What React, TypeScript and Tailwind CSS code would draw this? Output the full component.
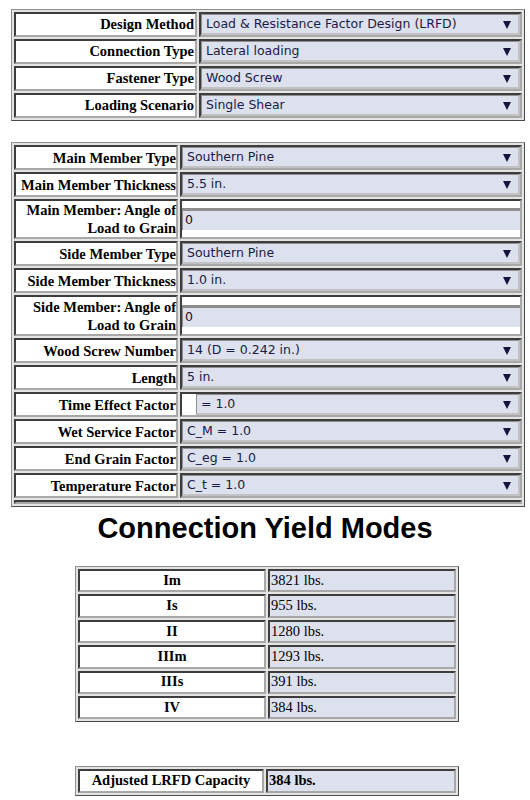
import React from "react";

const serif = "font-['Liberation_Serif','Times_New_Roman',serif]";
const sans = "font-['DejaVu_Sans','Verdana',sans-serif]";
const arial = "font-['Liberation_Sans','Arial',sans-serif]";

const outer =
  "border border-t-[#8e8e8e] border-l-[#8e8e8e] border-b-[#4a4a4a] border-r-[#4a4a4a] bg-[#e4e4e4] p-[2px] flex flex-col gap-[2px]";
const cell =
  "border-2 border-t-[#3d3d3d] border-l-[#3d3d3d] border-b-[#a8a8a8] border-r-[#a8a8a8]";

function Arrow() {
  return (
    <svg width="8" height="9" viewBox="0 0 8 9" className="shrink-0">
      <polygon points="0,1 8,1 4,9" fill="#14143c" />
    </svg>
  );
}

function Select({ text }: { text: string }) {
  return (
    <div
      className={`h-full w-full flex items-center justify-between bg-[#dde1ee] border border-t-[#8f8f8f] border-l-[#8f8f8f] border-b-2 border-r-2 border-b-[#c2c2c2] border-r-[#c2c2c2] pl-[4px] pr-[7px] text-[12.5px] text-[#1a1a46] ${sans}`}
    >
      <span className="whitespace-pre">{text}</span>
      <Arrow />
    </div>
  );
}

function Input({ value }: { value: string }) {
  return (
    <div
      className={`h-[22px] w-full flex items-center bg-[#dde1ee] border-t-[3px] border-t-[#8d8d8d] border-l border-l-[#8d8d8d] pl-[2px] text-[12.5px] text-[#111130] ${sans}`}
    >
      {value}
    </div>
  );
}

type Row = {
  label: string[];
  kind: "select" | "input" | "offset";
  value: string;
  h: string;
};

const top: { label: string; value: string }[] = [
  { label: "Design Method", value: "Load & Resistance Factor Design (LRFD)" },
  { label: "Connection Type", value: "Lateral loading" },
  { label: "Fastener Type", value: "Wood Screw" },
  { label: "Loading Scenario", value: "Single Shear" },
];

const mid: Row[] = [
  { label: ["Main Member Type"], kind: "select", value: "Southern Pine", h: "h-[25px]" },
  { label: ["Main Member Thickness"], kind: "select", value: "5.5 in.", h: "h-[25px]" },
  { label: ["Main Member: Angle of", "Load to Grain"], kind: "input", value: "0", h: "h-[40px]" },
  { label: ["Side Member Type"], kind: "select", value: "Southern Pine", h: "h-[25px]" },
  { label: ["Side Member Thickness"], kind: "select", value: "1.0 in.", h: "h-[25px]" },
  { label: ["Side Member: Angle of", "Load to Grain"], kind: "input", value: "0", h: "h-[41px]" },
  { label: ["Wood Screw Number"], kind: "select", value: "14 (D = 0.242 in.)", h: "h-[25px]" },
  { label: ["Length"], kind: "select", value: "5 in.", h: "h-[25px]" },
  { label: ["Time Effect Factor"], kind: "offset", value: "= 1.0", h: "h-[25px]" },
  { label: ["Wet Service Factor"], kind: "select", value: "C_M = 1.0", h: "h-[25px]" },
  { label: ["End Grain Factor"], kind: "select", value: "C_eg = 1.0", h: "h-[25px]" },
  { label: ["Temperature Factor"], kind: "select", value: "C_t = 1.0", h: "h-[25px]" },
];

const modes: { m: string; v: string }[] = [
  { m: "Im", v: "3821 lbs." },
  { m: "Is", v: "955 lbs." },
  { m: "II", v: "1280 lbs." },
  { m: "IIIm", v: "1293 lbs." },
  { m: "IIIs", v: "391 lbs." },
  { m: "IV", v: "384 lbs." },
];

export default function App() {
  return (
    <div className="w-[530px] h-[800px] bg-white overflow-hidden">
      {/* Table 1 */}
      <div className={`mt-[9px] ml-[11px] w-[514px] ${outer}`}>
        {top.map((r) => (
          <div key={r.label} className="flex gap-[2px] h-[25px]">
            <div
              className={`w-[183px] shrink-0 bg-white ${cell} flex items-center justify-end pr-[1px] text-[14.5px] font-bold text-black ${serif}`}
            >
              {r.label}
            </div>
            <div className={`flex-1 ${cell}`}>
              <Select text={r.value} />
            </div>
          </div>
        ))}
      </div>

      {/* Table 2 */}
      <div className={`mt-[21px] ml-[11px] w-[514px] ${outer}`}>
        {mid.map((r) => (
          <div key={r.label.join(" ")} className={`flex gap-[2px] ${r.h}`}>
            <div
              className={`w-[164px] shrink-0 bg-white ${cell} flex flex-col justify-center items-end text-right leading-[18px] text-[14.5px] font-bold text-black ${serif}`}
            >
              {r.label.map((l) => (
                <span key={l} className="whitespace-nowrap">
                  {l}
                </span>
              ))}
            </div>
            <div className={`flex-1 bg-white ${cell} flex items-center`}>
              {r.kind === "select" && <Select text={r.value} />}
              {r.kind === "input" && <Input value={r.value} />}
              {r.kind === "offset" && (
                <div className="h-full w-full pl-[14px]">
                  <Select text={r.value} />
                </div>
              )}
            </div>
          </div>
        ))}
        <div className={`h-[4px] ${cell} bg-white`} />
      </div>

      {/* Title */}
      <div
        className={`mt-[4px] h-[34px] leading-[34px] text-center text-[29px] font-bold text-black ${arial}`}
      >
        Connection Yield Modes
      </div>

      {/* Table 3 */}
      <div className={`mt-[21px] ml-[75px] w-[384px] ${outer}`}>
        {modes.map((r) => (
          <div key={r.m} className="flex gap-[2px] h-[23.4px]">
            <div
              className={`w-[188px] shrink-0 bg-white ${cell} flex items-center justify-center text-[14.5px] font-bold text-black ${serif}`}
            >
              {r.m}
            </div>
            <div
              className={`flex-1 bg-[#dde1ee] ${cell} flex items-center pl-[1px] text-[14.5px] text-black ${serif}`}
            >
              {r.v}
            </div>
          </div>
        ))}
      </div>

      {/* Table 4 */}
      <div className={`mt-[44px] ml-[75px] w-[384px] ${outer}`}>
        <div className="flex gap-[2px] h-[24px]">
          <div
            className={`w-[186px] shrink-0 bg-white ${cell} flex items-center justify-center text-[14.5px] font-bold text-black ${serif}`}
          >
            Adjusted LRFD Capacity
          </div>
          <div
            className={`flex-1 bg-[#dde1ee] ${cell} flex items-center pl-[1px] text-[14.5px] font-bold text-black ${serif}`}
          >
            384 lbs.
          </div>
        </div>
      </div>
    </div>
  );
}
